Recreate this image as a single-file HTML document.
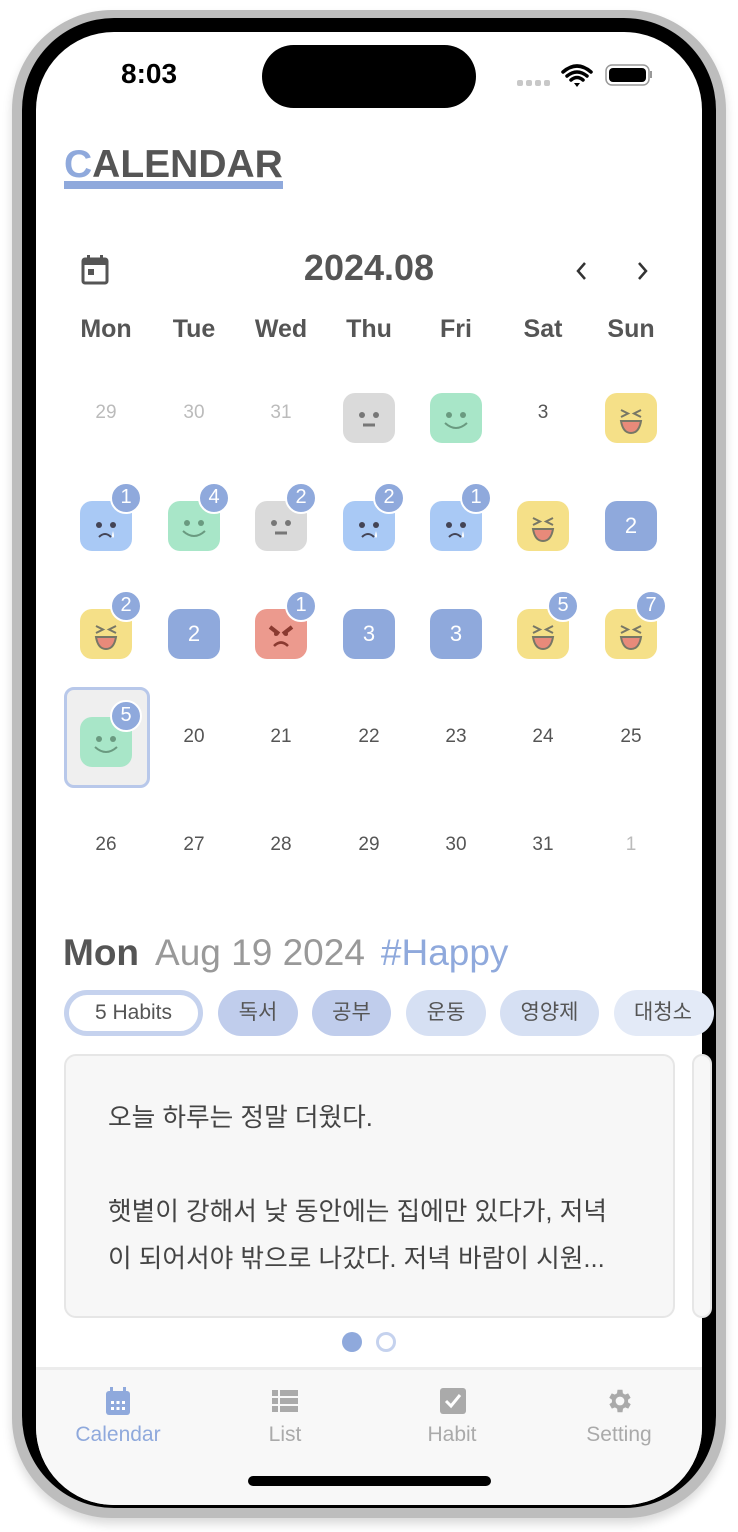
<!DOCTYPE html>
<html><head><meta charset="utf-8"><style>
*{margin:0;padding:0;box-sizing:border-box}
body{width:738px;height:1532px;background:#fff;position:relative;overflow:hidden;font-family:"Liberation Sans","Noto Sans CJK KR",sans-serif}
.abs{position:absolute}
.frame{left:12px;top:10px;width:714px;height:1508px;border-radius:100px;background:#bdbdbd;box-shadow:0 6px 10px rgba(0,0,0,.15)}
.bezel{left:22px;top:18px;width:694px;height:1490px;border-radius:92px;background:#000}
.screen{left:36px;top:32px;width:666px;height:1473px;border-radius:78px;background:#fff;overflow:hidden}
.t{position:absolute;text-align:center;transform:translateX(-50%);white-space:nowrap}
.wd{font-size:25px;color:#555;font-weight:bold;top:315px}
.dn{font-size:19px;color:#555;width:60px}
.fd{color:#bbb}
.face{position:absolute;width:52px;height:50px}
.badge{position:absolute;width:32px;height:32px;border-radius:50%;background:#8fa9dc;border:2.5px solid #fff;color:#fff;font-size:20px;text-align:center;line-height:27px}
.num{position:absolute;width:52px;height:50px;border-radius:12px;background:#8fa9dc;color:#fff;font-size:22px;text-align:center;line-height:50px}
.chip{position:absolute;top:990px;height:46px;border-radius:23px;font-size:21px;color:#555;text-align:center;line-height:46px}
.tab{position:absolute;top:1423px;font-size:21px;color:#aaa;transform:translateX(-50%)}
</style></head><body>
<svg width="0" height="0" style="position:absolute">
<defs>
<symbol id="neu" viewBox="0 0 52 50"><rect width="52" height="50" rx="12" fill="#dadada"/><circle cx="19" cy="22" r="3" fill="#777"/><circle cx="33" cy="22" r="3" fill="#777"/><path d="M20 32H32" stroke="#777" stroke-width="3"/></symbol>
<symbol id="smi" viewBox="0 0 52 50"><rect width="52" height="50" rx="12" fill="#a8e6c8"/><circle cx="19" cy="22" r="3" fill="#6a9a80"/><circle cx="33" cy="22" r="3" fill="#6a9a80"/><path d="M15 30Q26 40 37 30" stroke="#6a9a80" stroke-width="2" fill="none"/></symbol>
<symbol id="lau" viewBox="0 0 52 50"><rect width="52" height="50" rx="12" fill="#f5e088"/><path d="M16 17L23 20.5L16 24M36 17L29 20.5L36 24" stroke="#776" stroke-width="2" fill="none"/><path d="M16 28H36Q34 40 26 40Q18 40 16 28Z" fill="#e88a7a" stroke="#776" stroke-width="2"/></symbol>
<symbol id="sad" viewBox="0 0 52 50"><rect width="52" height="50" rx="12" fill="#a9c9f5"/><circle cx="19" cy="24" r="3" fill="#445"/><circle cx="33" cy="24" r="3" fill="#445"/><path d="M19 36Q25 30 31 36" stroke="#445" stroke-width="2" fill="none"/><path d="M33 30Q31 36 33 37Q35 36 33 30Z" fill="#fff"/></symbol>
<symbol id="ang" viewBox="0 0 52 50"><rect width="52" height="50" rx="12" fill="#ec9a8e"/><path d="M15 18L24 25M37 18L28 25" stroke="#8a3a30" stroke-width="4"/><circle cx="21" cy="25" r="2" fill="#8a3a30"/><circle cx="31" cy="25" r="2" fill="#8a3a30"/><path d="M19 37Q26 30 33 37" stroke="#8a3a30" stroke-width="2.5" fill="none"/></symbol>
</defs></svg>
<div class="abs frame"></div>
<div class="abs bezel"></div>
<div class="abs screen"></div>
<div class="abs" style="left:121px;top:58px;font-size:28px;font-weight:bold;color:#000">8:03</div>
<div class="abs" style="left:262px;top:45px;width:214px;height:63px;border-radius:32px;background:#000"></div>
<svg class="abs" style="left:515px;top:60px" width="140" height="30">
<g fill="#c8c8c8"><rect x="2" y="20" width="6" height="6" rx="2"/><rect x="11" y="20" width="6" height="6" rx="2"/><rect x="20" y="20" width="6" height="6" rx="2"/><rect x="29" y="20" width="6" height="6" rx="2"/></g>
<path d="M48 12Q62 0 76 12M52 16Q62 8 72 16M56 20Q62 15 68 20" stroke="#000" stroke-width="3.5" fill="none" stroke-linecap="round"/><path d="M59 23L62 27L65 23Z" fill="#000"/>
<rect x="91" y="5" width="43" height="20" rx="6" fill="none" stroke="#999" stroke-width="1.5"/><rect x="94" y="8" width="37" height="14" rx="4" fill="#000"/><rect x="135" y="11" width="2" height="7" fill="#999"/>
</svg>
<div class="abs" style="left:64px;top:143px;font-size:39px;font-weight:bold;color:#555"><span style="color:#8fa9dc">C</span>ALENDAR</div>
<div class="abs" style="left:64px;top:181px;width:219px;height:8px;background:#8fa9dc"></div>
<svg class="abs" style="left:80px;top:254px" width="30" height="32"><rect x="3" y="5" width="24" height="24" rx="2" fill="none" stroke="#555" stroke-width="3"/><rect x="3" y="5" width="24" height="6" fill="#555"/><rect x="7" y="1" width="3" height="6" fill="#555"/><rect x="20" y="1" width="3" height="6" fill="#555"/><rect x="8" y="15" width="6" height="6" fill="#555"/></svg>
<div class="t" style="left:369px;top:247px;font-size:36px;font-weight:bold;color:#555">2024.08</div>
<svg class="abs" style="left:570px;top:258px" width="85" height="26"><path d="M15 5L8 13L15 21M69 5L76 13L69 21" stroke="#333" stroke-width="2.5" fill="none"/></svg>
<div class="t wd" style="left:106px">Mon</div><div class="t wd" style="left:194px">Tue</div><div class="t wd" style="left:281px">Wed</div><div class="t wd" style="left:369px">Thu</div><div class="t wd" style="left:456px">Fri</div><div class="t wd" style="left:543px">Sat</div><div class="t wd" style="left:631px">Sun</div>
<div class="t dn fd" style="left:106px;top:402px">29</div><div class="t dn fd" style="left:194px;top:402px">30</div><div class="t dn fd" style="left:281px;top:402px">31</div>
<svg class="face" style="left:343px;top:393px"><use href="#neu"/></svg>
<svg class="face" style="left:430px;top:393px"><use href="#smi"/></svg>
<div class="t dn" style="left:543px;top:402px">3</div>
<svg class="face" style="left:605px;top:393px"><use href="#lau"/></svg>
<svg class="face" style="left:80px;top:501px"><use href="#sad"/></svg><div class="badge" style="left:110px;top:482px">1</div>
<svg class="face" style="left:168px;top:501px"><use href="#smi"/></svg><div class="badge" style="left:198px;top:482px">4</div>
<svg class="face" style="left:255px;top:501px"><use href="#neu"/></svg><div class="badge" style="left:285px;top:482px">2</div>
<svg class="face" style="left:343px;top:501px"><use href="#sad"/></svg><div class="badge" style="left:373px;top:482px">2</div>
<svg class="face" style="left:430px;top:501px"><use href="#sad"/></svg><div class="badge" style="left:460px;top:482px">1</div>
<svg class="face" style="left:517px;top:501px"><use href="#lau"/></svg>
<div class="num" style="left:605px;top:501px">2</div>
<svg class="face" style="left:80px;top:609px"><use href="#lau"/></svg><div class="badge" style="left:110px;top:590px">2</div>
<div class="num" style="left:168px;top:609px">2</div>
<svg class="face" style="left:255px;top:609px"><use href="#ang"/></svg><div class="badge" style="left:285px;top:590px">1</div>
<div class="num" style="left:343px;top:609px">3</div>
<div class="num" style="left:430px;top:609px">3</div>
<svg class="face" style="left:517px;top:609px"><use href="#lau"/></svg><div class="badge" style="left:547px;top:590px">5</div>
<svg class="face" style="left:605px;top:609px"><use href="#lau"/></svg><div class="badge" style="left:635px;top:590px">7</div>
<div class="abs" style="left:64px;top:687px;width:86px;height:101px;border:3px solid #b8c8ea;border-radius:10px;background:#efefef"></div>
<svg class="face" style="left:80px;top:717px"><use href="#smi"/></svg><div class="badge" style="left:110px;top:700px">5</div>
<div class="t dn" style="left:194px;top:726px">20</div><div class="t dn" style="left:281px;top:726px">21</div><div class="t dn" style="left:369px;top:726px">22</div><div class="t dn" style="left:456px;top:726px">23</div><div class="t dn" style="left:543px;top:726px">24</div><div class="t dn" style="left:631px;top:726px">25</div>
<div class="t dn" style="left:106px;top:834px">26</div><div class="t dn" style="left:194px;top:834px">27</div><div class="t dn" style="left:281px;top:834px">28</div><div class="t dn" style="left:369px;top:834px">29</div><div class="t dn" style="left:456px;top:834px">30</div><div class="t dn" style="left:543px;top:834px">31</div><div class="t dn fd" style="left:631px;top:834px">1</div>
<div class="abs" style="left:63px;top:932px;font-size:37px;white-space:nowrap"><b style="color:#555">Mon</b><span style="color:#999;margin-left:16px">Aug 19 2024</span><span style="color:#8fa9dc;margin-left:16px">#Happy</span></div>
<div class="chip" style="left:64px;width:139px;border:5px solid #c5d2ee;background:#fff;line-height:36px">5 Habits</div>
<div class="chip" style="left:218px;width:80px;background:#c0cdec">독서</div>
<div class="chip" style="left:312px;width:79px;background:#c0cdec">공부</div>
<div class="chip" style="left:406px;width:80px;background:#d6e0f3">운동</div>
<div class="chip" style="left:500px;width:99px;background:#d6e0f3">영양제</div>
<div class="chip" style="left:614px;width:100px;background:#e3eaf7;text-align:left;padding-left:20px">대청소</div>
<div class="abs" style="left:64px;top:1054px;width:611px;height:264px;background:#f7f7f7;border:2px solid #e6e6e6;border-radius:12px"></div>
<div class="abs" style="left:692px;top:1054px;width:20px;height:264px;background:#f7f7f7;border:2px solid #e6e6e6;border-radius:12px"></div>
<div class="abs" style="left:108px;top:1095px;font-size:25.7px;color:#444;line-height:47px;width:560px;white-space:nowrap">오늘 하루는 정말 더웠다.<br><br>햇볕이 강해서 낮 동안에는 집에만 있다가, 저녁<br>이 되어서야 밖으로 나갔다. 저녁 바람이 시원...</div>
<div class="abs" style="left:342px;top:1332px;width:20px;height:20px;border-radius:50%;background:#8fa9dc"></div>
<div class="abs" style="left:376px;top:1332px;width:20px;height:20px;border-radius:50%;border:3px solid #c5d2ee"></div>
<div class="abs" style="left:36px;top:1367px;width:666px;height:138px;background:#f8f8f8;border-top:3px solid #ececec;border-radius:0 0 78px 78px"></div>
<svg class="abs" style="left:104px;top:1386px" width="28" height="32"><rect x="2" y="5" width="24" height="24" rx="3" fill="#8fa9dc"/><rect x="6" y="1" width="3" height="6" fill="#8fa9dc"/><rect x="19" y="1" width="3" height="6" fill="#8fa9dc"/><g fill="#fff"><rect x="7" y="15" width="3" height="3"/><rect x="12.5" y="15" width="3" height="3"/><rect x="18" y="15" width="3" height="3"/><rect x="7" y="21" width="3" height="3"/><rect x="12.5" y="21" width="3" height="3"/><rect x="18" y="21" width="3" height="3"/></g></svg>
<svg class="abs" style="left:271px;top:1389px" width="28" height="26"><g fill="#aaa"><rect x="1" y="1" width="6" height="6"/><rect x="9" y="1" width="18" height="6"/><rect x="1" y="9" width="6" height="6"/><rect x="9" y="9" width="18" height="6"/><rect x="1" y="17" width="6" height="6"/><rect x="9" y="17" width="18" height="6"/></g></svg>
<svg class="abs" style="left:439px;top:1387px" width="28" height="28"><rect x="1" y="1" width="26" height="26" rx="3" fill="#aaa"/><path d="M7 14L12 19L21 8" stroke="#fff" stroke-width="3" fill="none"/></svg>
<svg class="abs" style="left:605px;top:1386px" width="30" height="30" viewBox="0 0 24 24"><path fill="#aaa" d="M19.4 13a7.5 7.5 0 0 0 0-2l2.1-1.6-2-3.5-2.5 1a7 7 0 0 0-1.7-1L15 3h-4l-.4 2.9a7 7 0 0 0-1.7 1l-2.5-1-2 3.5L6.6 11a7.5 7.5 0 0 0 0 2l-2.1 1.6 2 3.5 2.5-1a7 7 0 0 0 1.7 1L11 21h4l.4-2.9a7 7 0 0 0 1.7-1l2.5 1 2-3.5zM13 15.5a3.5 3.5 0 1 1 0-7 3.5 3.5 0 0 1 0 7z" transform="translate(-1 0)"/></svg>
<div class="tab" style="left:118px;color:#8fa9dc">Calendar</div>
<div class="tab" style="left:285px">List</div>
<div class="tab" style="left:452px">Habit</div>
<div class="tab" style="left:619px">Setting</div>
<div class="abs" style="left:248px;top:1476px;width:243px;height:10px;border-radius:5px;background:#000"></div>
</body></html>
